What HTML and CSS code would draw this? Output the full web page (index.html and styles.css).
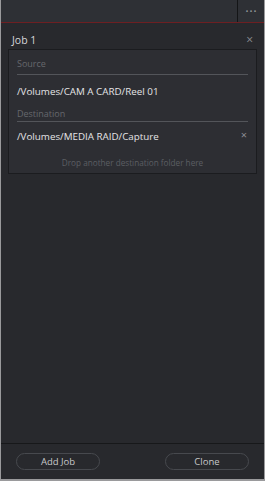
FILE: index.html
```html
<!DOCTYPE html>
<html>
    <head>
        <meta name="viewport" content="width=device-width, initial-scale=1"/>
        <link rel="stylesheet" href="styles.css">
    </head>
    <body>
        <div class="window">
            <div class="topbar">
                <div class="topbar__fill"></div>
                <div class="topbar__menu">&bull;&bull;&bull;</div>
            </div>
            <div class="content">
                <div class="job">
                    <div class="job__head">
                        <span class="job__title">Job 1</span>
                        <span class="job__close">&times;</span>
                    </div>
                    <div class="card">
                        <div class="card__label">Source</div>
                        <div class="card__path">/Volumes/CAM A CARD/Reel 01</div>
                        <div class="card__label card__label_dest">Destination</div>
                        <div class="card__path card__path_dest">
                            <span>/Volumes/MEDIA RAID/Capture</span>
                            <span class="card__remove">&times;</span>
                        </div>
                        <div class="card__drop">Drop another destination folder here</div>
                    </div>
                </div>
            </div>
            <div class="footer">
                <button class="footer__button">Add Job</button>
                <button class="footer__button">Clone</button>
            </div>
        </div>
    </body>
</html>
```

FILE: styles.css
```css
body, html {
    margin: 0;
    height: 100%;
    font-family: "Open Sans", "Noto Sans", sans-serif;
    font-size: 10px;
    -webkit-font-smoothing: antialiased;
    background-color: #9a9a9c;
}

* {
    box-sizing: border-box;
}

.window {
    display: flex;
    flex-direction: column;
    height: 479px;
    width: 263px;
    margin-left: 1px;
    background-color: #28292d;
    overflow: hidden;
}

.topbar {
    display: flex;
    height: 23px;
    background-color: #2e3035;
    border-bottom: 1px solid #6e1f22;
    flex-shrink: 0;
}

.topbar__fill {
    flex: 1;
    border-right: 1px solid #141517;
}

.topbar__menu {
    width: 26px;
    text-align: center;
    color: #8d8f94;
    font-size: 8px;
    letter-spacing: 1px;
    line-height: 21px;
    padding-left: 1px;
}

.content {
    flex: 1;
    padding: 0 7px;
}

.job__head {
    display: flex;
    justify-content: space-between;
    align-items: center;
    height: 26px;
    padding: 7px 4px 0 4px;
}

.job__title {
    color: #d6d7d9;
    font-size: 10.5px;
    line-height: 14px;
}

.job__close {
    color: #8b8d92;
    font-size: 12px;
    line-height: 14px;
}

.card {
    background-color: #2d2e33;
    border: 1px solid #1b1c1f;
    padding: 8px 8px 4px 8px;
}

.card__label {
    color: #66686d;
    font-size: 9px;
    line-height: 12px;
    padding-bottom: 4px;
    border-bottom: 1px solid #53555a;
}

.card__label_dest {
    padding-bottom: 1px;
}

.card__path {
    color: #e4e4e6;
    font-size: 9.8px;
    line-height: 12px;
    padding: 11px 0 10px 0;
}

.card__path_dest {
    display: flex;
    justify-content: space-between;
    align-items: flex-start;
    padding: 9px 0 0 0;
}

.card__remove {
    color: #8b8d92;
    font-size: 11px;
    line-height: 8px;
    padding-right: 1px;
}

.card__drop {
    text-align: center;
    color: #5c5e63;
    font-size: 8.2px;
    line-height: 12px;
    padding-top: 14px;
}

.footer {
    display: flex;
    justify-content: space-between;
    height: 36px;
    padding: 9px 15px 0 15px;
    border-top: 1px solid #17181a;
    flex-shrink: 0;
}

.footer__button {
    width: 84px;
    height: 17px;
    border-radius: 9px;
    border: 1px solid #47494e;
    background-color: transparent;
    color: #c7c8ca;
    font-family: "Open Sans", "Noto Sans", sans-serif;
    font-size: 9.5px;
    padding: 0;
}
```
